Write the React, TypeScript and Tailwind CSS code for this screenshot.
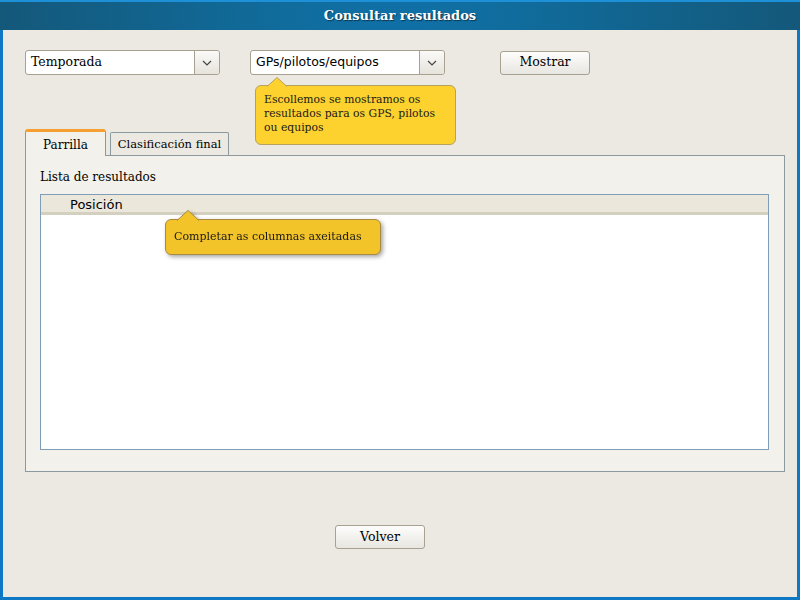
import React from "react";

const serif = { fontFamily: '"DejaVu Serif", "Liberation Serif", serif' };
const sans = { fontFamily: '"DejaVu Sans", "Liberation Sans", sans-serif' };

function Chevron() {
  return (
    <svg width="10" height="6" viewBox="0 0 10 6" fill="none">
      <path d="M1 1 L5 5 L9 1" stroke="#444" strokeWidth="1.2" />
    </svg>
  );
}

function Combo({ label, font }: { label: string; font: React.CSSProperties }) {
  return (
    <div className="flex h-[25px] w-[195px] rounded-[3px] border border-[#a8a090] bg-white">
      <div className="flex flex-1 items-center pl-[5px] text-[12.5px] text-black" style={font}>
        {label}
      </div>
      <div className="flex w-[25px] items-center justify-center border-l border-[#a8a090] bg-gradient-to-b from-[#fbfaf8] to-[#e6e3dc] rounded-r-[3px]">
        <Chevron />
      </div>
    </div>
  );
}

function Button({ label, w }: { label: string; w: string }) {
  return (
    <div
      className={`flex h-[24px] ${w} items-center justify-center rounded-[3px] border border-[#a8a090] bg-gradient-to-b from-[#fdfdfc] to-[#e8e6e0] text-[12.5px] text-black`}
      style={serif}
    >
      {label}
    </div>
  );
}

export default function App() {
  return (
    <div className="flex h-[600px] w-[800px] flex-col border-[3px] border-t-0 border-[#0e78c4] bg-[#ece9e2]">
      <div
        className="flex h-[30px] shrink-0 items-center justify-center border-t-[2px] border-[#1e90d8] -mx-[3px] text-[13px] font-bold text-white"
        style={{
          ...serif,
          background: "linear-gradient(to right, #14587a 0%, #106c9c 35%, #1070a6 50%, #106c9c 65%, #14587a 100%)",
          textShadow: "1px 1px 1px #0a3550",
        }}
      >
        Consultar resultados
      </div>
      <div className="relative flex flex-1 flex-col pl-[22px] pr-[12px]">
        <div className="mt-[20px] flex items-center">
          <Combo label="Temporada" font={serif} />
          <div className="ml-[30px]">
            <Combo label="GPs/pilotos/equipos" font={sans} />
          </div>
          <div className="ml-[55px]">
            <Button label="Mostrar" w="w-[90px]" />
          </div>
        </div>

        {/* Tooltip 1 */}
        <div className="absolute left-[252px] top-[55px] z-10">
          <div className="relative">
            <svg className="absolute left-[12px] top-[-8px]" width="24" height="10" viewBox="0 0 24 10">
              <path d="M0 9.5 L10 0.5 L20 9.5" fill="#fdd22e" stroke="#b8a060" strokeWidth="1" />
            </svg>
            <div
              className="w-[201px] rounded-[6px] border border-[#b8a060] bg-[#fdd22e] px-[8px] pt-[7px] pb-[9px] text-[10.8px] leading-[14px] text-[#1a1a1a]"
              style={serif}
            >
              Escollemos se mostramos os resultados para os GPS, pilotos ou equipos
            </div>
          </div>
        </div>

        <div className="mt-[54px] flex items-end">
          <div
            className="relative z-[1] -mb-px flex h-[27px] w-[81px] items-center justify-center rounded-t-[3px] border border-b-0 border-[#8c9aa0] border-t-[3px] border-t-[#f5a030] bg-[#f2f1ec] pt-[2px] text-[12px] text-black"
            style={serif}
          >
            Parrilla
          </div>
          <div
            className="ml-[4px] flex h-[23px] w-[119px] items-center justify-center rounded-t-[2px] border border-b-0 border-[#8c9aa0] bg-[#ece9e2] pt-[1px] text-[11.5px] text-black"
            style={serif}
          >
            Clasificación final
          </div>
        </div>
        <div className="flex h-[317px] flex-col border border-[#8c9aa0] bg-[#f2f1ec] pl-[14px] pr-[15px]">
          <div className="mt-[13px] text-[12px] leading-[16px] text-black" style={serif}>
            Lista de resultados
          </div>
          <div className="mt-[9px] flex h-[256px] flex-col border border-[#7f9db9] bg-white">
            <div
              className="flex h-[20px] items-center border-b-[3px] border-[#d4d0c0] bg-[#ebe8db] pl-[29px] pt-[3px] text-[13px] text-black"
              style={sans}
            >
              Posición
            </div>
          </div>
        </div>

        {/* Tooltip 2 */}
        <div className="absolute left-[162px] top-[189px] z-10">
          <div className="relative drop-shadow-[2px_2px_2px_rgba(0,0,0,0.35)]">
            <svg className="absolute left-[12px] top-[-9px]" width="24" height="11" viewBox="0 0 24 11">
              <path d="M0 10.5 L11 0.5 L22 10.5" fill="#f2c42a" stroke="#a88a40" strokeWidth="1" />
            </svg>
            <div
              className="flex h-[36px] w-[216px] items-center rounded-[6px] border border-[#a88a40] bg-[#f2c42a] px-[8px] text-[11px] text-[#1a1a1a]"
              style={serif}
            >
              Completar as columnas axeitadas
            </div>
          </div>
        </div>

        <div className="mt-[53px] flex pl-[310px]">
          <Button label="Volver" w="w-[90px]" />
        </div>
      </div>
    </div>
  );
}
